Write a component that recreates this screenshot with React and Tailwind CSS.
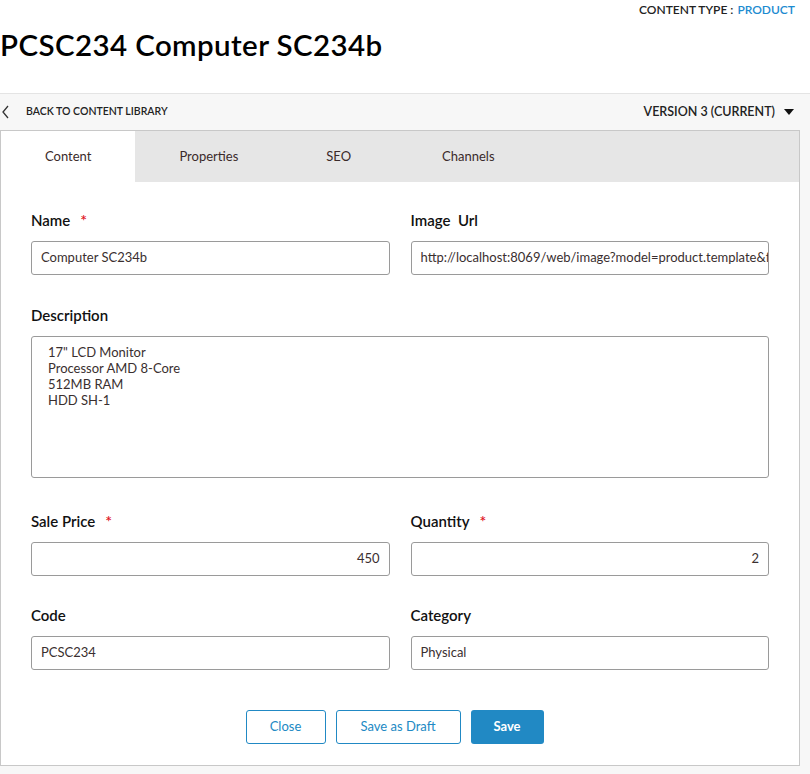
import React from 'react';

const font = { fontFamily: 'Lato, "Liberation Sans", sans-serif' };

const Label = ({ children, required }) => (
  <div className="flex items-center h-[20px] mb-[11px] text-[15px] font-semibold text-[#111]">
    {children}
    {required && <span className="ml-[10px] text-[#e0141e] text-[16px] leading-none">*</span>}
  </div>
);

const Field = ({ label, required, value, right }) => (
  <div className="flex-1 min-w-0">
    <Label required={required}>{label}</Label>
    <div
      className={`h-[34px] border border-[#9a9a9a] rounded-[3px] px-[9px] flex items-center text-[13px] text-[#3a2f2f] overflow-hidden whitespace-nowrap ${
        right ? 'justify-end' : ''
      }`}
    >
      {value}
    </div>
  </div>
);

const tabs = ['Content', 'Properties', 'SEO', 'Channels'];

export default function App() {
  return (
    <div className="w-[810px] h-[774px] bg-[#f7f7f7] overflow-hidden" style={font}>
      {/* Header */}
      <div className="bg-white h-[94px] border-b border-[#e4e4e4]">
        <div className="flex justify-end pr-[15px] pt-[1px] text-[12px] font-semibold text-[#222]">
          CONTENT TYPE :<span className="ml-[4px] text-[#1d8bd0]">PRODUCT</span>
        </div>
        <h1 className="mt-[11px] text-[29.5px] font-semibold text-black tracking-[0.4px] leading-none">
          PCSC234 Computer SC234b
        </h1>
      </div>

      {/* Sub bar */}
      <div className="h-[36px] flex items-center justify-between pr-[16px] text-[#222]">
        <div className="flex items-center">
          <svg width="10" height="14" viewBox="0 0 10 14" className="ml-[1px]">
            <path d="M7 1 L2 7 L7 13" fill="none" stroke="#333" strokeWidth="1.3" />
          </svg>
          <span className="ml-[15px] text-[10.5px] font-semibold uppercase">Back to content library</span>
        </div>
        <div className="flex items-center text-[12.5px] font-semibold">
          VERSION 3 (CURRENT)
          <svg width="10" height="7" viewBox="0 0 10 7" className="ml-[9px]">
            <path d="M0 0 L10 0 L5 6 Z" fill="#111" />
          </svg>
        </div>
      </div>

      {/* Panel */}
      <div className="w-[800px] bg-white border border-[#c8c8c8] h-[636px]">
        <div className="flex h-[51px] bg-[#e6e6e6]">
          {tabs.map((t, i) => (
            <div
              key={t}
              className={`px-[44px] pt-[1px] flex items-center text-[13px] text-[#3a2a2a] ${
                i === 0 ? 'bg-white' : ''
              } ${i === 3 ? 'pl-[47px]' : ''}`}
            >
              {t}
            </div>
          ))}
        </div>

        <div className="px-[30px] pt-[28px]">
          <div className="flex gap-[21px]">
            <Field label="Name" required value="Computer SC234b" />
            <Field label={<span>Image&nbsp; Url</span>} value="http://localhost:8069/web/image?model=product.template&f" />
          </div>

          <div className="mt-[30px]">
            <Label>Description</Label>
            <div className="h-[142px] border border-[#9a9a9a] rounded-[3px] pl-[16px] pt-[7px] text-[13px] leading-[16px] text-[#3a2f2f]">
              <div>17" LCD Monitor</div>
              <div>Processor AMD 8-Core</div>
              <div>512MB RAM</div>
              <div>HDD SH-1</div>
            </div>
          </div>

          <div className="flex gap-[21px] mt-[33px]">
            <Field label="Sale Price" required value="450" right />
            <Field label="Quantity" required value="2" right />
          </div>

          <div className="flex gap-[21px] mt-[29px]">
            <Field label="Code" value="PCSC234" />
            <Field label="Category" value="Physical" />
          </div>

          <div className="flex justify-center gap-[10px] mt-[40px] pr-[11px] text-[13px]">
            <button className="w-[80px] h-[34px] border border-[#2189c4] rounded-[3px] text-[#2189c4]">Close</button>
            <button className="w-[125px] h-[34px] border border-[#2189c4] rounded-[3px] text-[#2189c4]">Save as Draft</button>
            <button className="w-[73px] h-[34px] bg-[#2189c4] rounded-[3px] text-white font-bold">Save</button>
          </div>
        </div>
      </div>
    </div>
  );
}
